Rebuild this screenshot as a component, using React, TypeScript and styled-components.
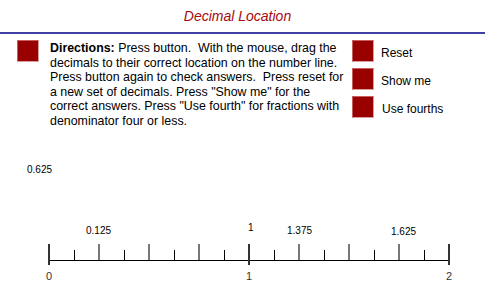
import React from 'react';
import styled, { createGlobalStyle } from 'styled-components';

const Global = createGlobalStyle`
  html, body { margin: 0; padding: 0; background: #fff; }
  body { font-family: "Liberation Sans", Arial, sans-serif; }
`;

const Page = styled.div`
  width: 486px;
  height: 299px;
  overflow: hidden;
  display: flex;
  flex-direction: column;
  color: #000;
`;

const Header = styled.header`
  height: 32px;
  display: flex;
  align-items: center;
  justify-content: center;
  padding-right: 10px;
  border-bottom: 2px solid #3f3fa3;
  margin-right: 1px;
`;

const Title = styled.h1`
  margin: 0;
  font-size: 14px;
  font-weight: normal;
  font-style: italic;
  color: #a50a0a;
`;

const Top = styled.section`
  height: 106px;
  display: grid;
  grid-template-columns: 22px 313px auto;
  align-items: start;
  padding: 6px 0 0 17px;
  box-sizing: border-box;
`;

const Square = styled.button`
  width: 22px;
  height: 22px;
  padding: 0;
  flex: none;
  background: #990000;
  border: 1px solid #d9a0a0;
  border-top-color: #c06060;
  border-left-color: #c06060;
  cursor: pointer;
`;

const Directions = styled.p`
  margin: 0 0 0 11px;
  font-size: 12.4px;
  line-height: 14.6px;
  white-space: pre;
  position: relative;
  top: 1px;
`;

const Buttons = styled.div`
  display: flex;
  flex-direction: column;
  gap: 6px;
`;

const ButtonRow = styled.div<{ $indent?: number }>`
  display: flex;
  align-items: center;
  gap: ${p => 7 + (p.$indent ?? 0)}px;
  font-size: 12px;
`;

const ButtonLabel = styled.span`
  padding-top: 3px;
`;

const Canvas = styled.div`
  position: relative;
  flex: 1;
`;

const Decimal = styled.span<{ $x: number; $y: number }>`
  position: absolute;
  left: ${p => p.$x}px;
  top: ${p => p.$y}px;
  font-size: 10px;
  line-height: 12px;
  cursor: move;
  user-select: none;
`;

const Axis = styled.svg`
  position: absolute;
  left: 0;
  top: 0;
  font-family: "Liberation Sans", Arial, sans-serif;
  font-size: 11px;
`;

const decimals = [
  { label: '0.625', x: 27, y: 24 },
  { label: '0.125', x: 86, y: 85 },
  { label: '1', x: 248, y: 82 },
  { label: '1.375', x: 287, y: 85 },
  { label: '1.625', x: 391, y: 86 },
];

const X0 = 48;
const STEP = 25;
const LINE_Y = 120.5;

function NumberLine() {
  const ticks = Array.from({ length: 17 }, (_, i) => i);
  return (
    <Axis width={486} height={159}>
      <line x1={X0} x2={X0 + STEP * 16 + 1} y1={LINE_Y} y2={LINE_Y} stroke="#000" strokeWidth={1} />
      {ticks.map(i => {
        const x = X0 + i * STEP;
        if (i % 8 === 0) {
          return <rect key={i} x={x} y={104} width={2} height={21} fill="#333" />;
        }
        if (i % 2 === 0) {
          return <rect key={i} x={x} y={104} width={2} height={16} fill="#777" />;
        }
        return <rect key={i} x={x + 1} y={110} width={1} height={10} fill="#000" />;
      })}
      {[0, 1, 2].map(n => (
        <text key={n} x={X0 + 1 + n * STEP * 8} y={140} textAnchor="middle" fill="#333">
          {n}
        </text>
      ))}
    </Axis>
  );
}

const buttons = [
  { label: 'Reset', indent: 0 },
  { label: 'Show me', indent: 0 },
  { label: 'Use fourths', indent: 1 },
];

export default function App() {
  return (
    <Page>
      <Global />
      <Header>
        <Title>Decimal Location</Title>
      </Header>
      <Top>
        <Square aria-label="Check" />
        <Directions>
          <b>Directions:</b>
          {` Press button.  With the mouse, drag the
decimals to their correct location on the number line.
Press button again to check answers.  Press reset for
a new set of decimals. Press "Show me" for the
correct answers. Press "Use fourth" for fractions with
denominator four or less.`}
        </Directions>
        <Buttons>
          {buttons.map(b => (
            <ButtonRow key={b.label} $indent={b.indent}>
              <Square aria-label={b.label} />
              <ButtonLabel>{b.label}</ButtonLabel>
            </ButtonRow>
          ))}
        </Buttons>
      </Top>
      <Canvas>
        {decimals.map(d => (
          <Decimal key={d.label + d.x} $x={d.x} $y={d.y}>
            {d.label}
          </Decimal>
        ))}
        <NumberLine />
      </Canvas>
    </Page>
  );
}
